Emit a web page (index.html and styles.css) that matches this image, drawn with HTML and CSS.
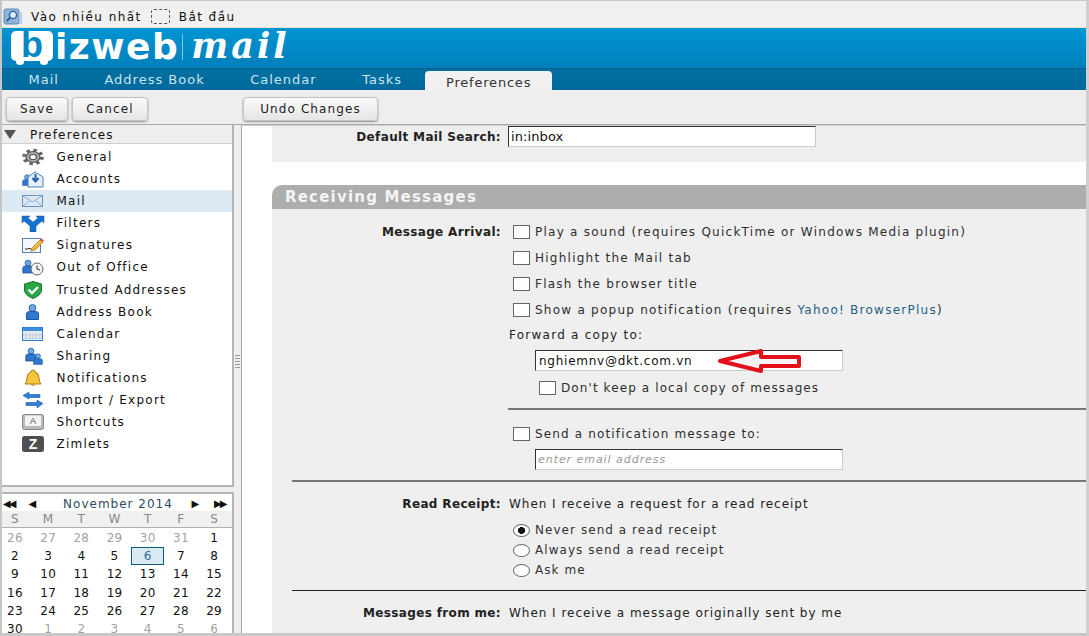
FILE: index.html
```html
<!DOCTYPE html>
<html lang="vi">
<head>
    <meta charset="UTF-8">
    <meta name="viewport" content="width=device-width, initial-scale=1.0">
    <title>Bizweb Mail - Preferences</title>
    <link rel="stylesheet" href="styles.css">
</head>
<body>

    <svg class="defs" width="0" height="0" aria-hidden="true">
        <symbol id="person" viewBox="0 0 14 16">
            <circle cx="7" cy="4" r="3.4" fill="#6fa8e0" stroke="#2a62b0"/>
            <path d="M1 15.5V10q0-2.5 3-2.5h6q3 0 3 2.5v5.5z" fill="#2f78cf" stroke="#1d529c"/>
        </symbol>
    </svg>

    <div class="bookmarks">
        <svg class="bm-icon" viewBox="0 0 20 17">
            <rect x="1" y="1" width="15" height="15" rx="2" fill="#8fb4d9" stroke="#5b86b3"/>
            <rect x="16" y="4" width="3" height="12" fill="#b7cee6"/>
            <circle cx="10" cy="7" r="3.6" fill="#dcebf8" stroke="#2f5f94" stroke-width="1.4"/>
            <path d="M7.4 9.6 3.6 13.2" stroke="#2f5f94" stroke-width="2"/>
        </svg>
        <span class="bm-text">Vào nhiều nhất</span>
        <span class="bm-folder"></span>
        <span class="bm-text">Bắt đầu</span>
    </div>

    <div class="masthead">
        <div class="logo-mark">
            <span class="logo-b">b</span>
            <i class="wheel wheel-l"></i>
            <i class="wheel wheel-r"></i>
        </div>
        <span class="logo-word">izweb</span>
        <span class="logo-bar"></span>
        <span class="logo-mail">mail</span>
    </div>

    <div class="tabs">
        <a class="tab">Mail</a>
        <a class="tab">Address Book</a>
        <a class="tab">Calendar</a>
        <a class="tab">Tasks</a>
        <a class="tab tab-active">Preferences</a>
    </div>

    <div class="toolbar">
        <div class="toolbar-left">
            <button class="btn btn-save">Save</button>
            <button class="btn btn-cancel">Cancel</button>
        </div>
        <button class="btn btn-undo">Undo Changes</button>
    </div>

    <div class="workspace">
        <div class="sidebar">
            <div class="tree">
                <div class="tree-head"><span class="tri"></span>Preferences</div>
                <ul class="tree-list">
                    <li>
                        <svg class="ico" viewBox="0 0 24 18">
                            <g transform="translate(12 9) scale(1.3 1) translate(-12 -9)">
                                <circle cx="12" cy="9" r="6.6" fill="none" stroke="#666" stroke-width="3.4" stroke-dasharray="2.6 2.6"/>
                                <circle cx="12" cy="9" r="5.4" fill="#a9a9a9" stroke="#555"/>
                                <circle cx="12" cy="9" r="2.6" fill="#fff" stroke="#555"/>
                            </g>
                        </svg>General
                    </li>
                    <li>
                        <svg class="ico" viewBox="0 0 24 18">
                            <use href="#person" x="1" y="3" width="10" height="14"/>
                            <path d="M7 7l7-5 8 5v10H7z" fill="#e4eff9" stroke="#4d7fb5"/>
                            <path d="M14.500 4v6M11.500 8l3 3.500 3-3.500" fill="none" stroke="#1f5fb4" stroke-width="2"/>
                        </svg>Accounts
                    </li>
                    <li class="selected">
                        <svg class="ico" viewBox="0 0 24 18">
                            <rect x="1.500" y="3.500" width="20" height="11" fill="#dce9f5" stroke="#6d94bd"/>
                            <path d="M2 4l9.500 6L21 4M2 14l6-5M21 14l-6-5" fill="none" stroke="#8aabcd"/>
                        </svg>Mail
                    </li>
                    <li>
                        <svg class="ico" viewBox="0 0 24 18">
                            <path d="M1 2h8L7 4l5 4 5-4-2-2h8v7l-2-2-6 5v6H9v-6L3 7 1 9z" fill="#1670d0" stroke="#0f58a8" stroke-width=".5"/>
                        </svg>Filters
                    </li>
                    <li>
                        <svg class="ico" viewBox="0 0 24 18">
                            <rect x="1.500" y="2.500" width="18" height="14" fill="#f4f7fb" stroke="#5a7fa8"/>
                            <path d="M4 13h3q1-2 2 0h3" fill="none" stroke="#333"/>
                            <path d="M11 12l8-8 3 2-8 8-4 1z" fill="#f0b93a" stroke="#a8741a" stroke-width=".7"/>
                            <path d="M19 4l1.500-1.500 2.500 2L22 6z" fill="#d9534f"/>
                        </svg>Signatures
                    </li>
                    <li>
                        <svg class="ico" viewBox="0 0 24 18">
                            <use href="#person" x="1" y="1" width="12" height="15"/>
                            <circle cx="16" cy="11" r="6" fill="#f3f3f3" stroke="#666"/>
                            <path d="M16 7.500V11l3 1" fill="none" stroke="#333"/>
                        </svg>Out of Office
                    </li>
                    <li>
                        <svg class="ico" viewBox="0 0 24 18">
                            <path d="M12 0.500l8.500 2.500v6q0 5-8.500 8.500Q3.500 14 3.500 9V3z" fill="#27a845" stroke="#16752e"/>
                            <path d="M7.500 8.500l3.500 3.500 6-6" fill="none" stroke="#fff" stroke-width="2.400"/>
                        </svg>Trusted Addresses
                    </li>
                    <li>
                        <svg class="ico" viewBox="0 0 24 18">
                            <use href="#person" x="4.500" y="1" width="14" height="16"/>
                        </svg>Address Book
                    </li>
                    <li>
                        <svg class="ico" viewBox="0 0 24 18">
                            <rect x="1.500" y="2.500" width="20" height="13" fill="#e8edf3" stroke="#2c7fd0"/>
                            <rect x="2" y="3" width="19" height="3" fill="#3d8fdc"/>
                            <path d="M5 7v8M8.500 7v8M12 7v8M15.500 7v8M19 7v8M2 10h19M2 13h19" stroke="#b9c4d0" stroke-width=".7"/>
                        </svg>Calendar
                    </li>
                    <li>
                        <svg class="ico" viewBox="0 0 24 18">
                            <use href="#person" x="4" y="0" width="12" height="15"/>
                            <use href="#person" x="12" y="6" width="10" height="12"/>
                        </svg>Sharing
                    </li>
                    <li>
                        <svg class="ico" viewBox="0 0 24 18">
                            <path d="M12 1q2 0 2 2 4 1 4 6 0 4 2 6H4q2-2 2-6 0-5 4-6 0-2 2-2z" fill="#f5c63c" stroke="#a97c12"/>
                            <path d="M9.500 15.500q2.500 2.500 5 0z" fill="#a97c12"/>
                        </svg>Notifications
                    </li>
                    <li>
                        <svg class="ico" viewBox="0 0 24 18">
                            <path d="M2 4.500L8 1v2.500h11v3H8V8z" fill="#2f7fd6" stroke="#1d5aa3" stroke-width=".6"/>
                            <path d="M22 12.500L16 9v2.500H5v3h11V17z" fill="#2f7fd6" stroke="#1d5aa3" stroke-width=".6"/>
                        </svg>Import / Export
                    </li>
                    <li>
                        <svg class="ico" viewBox="0 0 24 18">
                            <rect x="1.500" y="1.500" width="21" height="15" rx="2" fill="#b9b9b9" stroke="#888"/>
                            <rect x="4" y="2.500" width="16" height="10.500" rx="1" fill="#f3f3f3"/>
                            <text class="key-text" x="12" y="10.500" text-anchor="middle">A</text>
                        </svg>Shortcuts
                    </li>
                    <li>
                        <svg class="ico" viewBox="0 0 24 18">
                            <rect x="1" y="1" width="22" height="16" rx="2.500" fill="#505050"/>
                            <text class="zim-text" x="12" y="13.500" text-anchor="middle">Z</text>
                        </svg>Zimlets
                    </li>
                </ul>
            </div>

            <div class="minical">
                <div class="cal-head">
                    <span class="cal-nav">◀◀</span>
                    <span class="cal-nav cal-nav-one">◀</span>
                    <span class="cal-title">November 2014</span>
                    <span class="cal-nav cal-nav-one">▶</span>
                    <span class="cal-nav">▶▶</span>
                </div>
                <div class="cal-grid cal-days">
                    <span>S</span><span>M</span><span>T</span><span>W</span><span>T</span><span>F</span><span>S</span>
                </div>
                <div class="cal-grid cal-dates">
                    <span class="dim">26</span><span class="dim">27</span><span class="dim">28</span><span class="dim">29</span><span class="dim">30</span><span class="dim">31</span><span>1</span>
                    <span>2</span><span>3</span><span>4</span><span>5</span><span class="today">6</span><span>7</span><span>8</span>
                    <span>9</span><span>10</span><span>11</span><span>12</span><span>13</span><span>14</span><span>15</span>
                    <span>16</span><span>17</span><span>18</span><span>19</span><span>20</span><span>21</span><span>22</span>
                    <span>23</span><span>24</span><span>25</span><span>26</span><span>27</span><span>28</span><span>29</span>
                    <span>30</span><span class="dim">1</span><span class="dim">2</span><span class="dim">3</span><span class="dim">4</span><span class="dim">5</span><span class="dim">6</span>
                </div>
            </div>
        </div>

        <div class="sash"><span class="grip"></span></div>

        <div class="content">
            <div class="search-panel">
                <label class="row-label">Default Mail Search:</label>
                <div class="text-field search-field">in:inbox</div>
            </div>

            <div class="section-head">Receiving Messages</div>

            <div class="section-body">
                <div class="row">
                    <label class="row-label">Message Arrival:</label>
                    <label class="check"><span class="box"></span>Play a sound (requires QuickTime or Windows Media plugin)</label>
                </div>
                <div class="row">
                    <span class="row-label"></span>
                    <label class="check"><span class="box"></span>Highlight the Mail tab</label>
                </div>
                <div class="row">
                    <span class="row-label"></span>
                    <label class="check"><span class="box"></span>Flash the browser title</label>
                </div>
                <div class="row">
                    <span class="row-label"></span>
                    <label class="check"><span class="box"></span>Show a popup notification (requires <a class="link">Yahoo! BrowserPlus</a>)</label>
                </div>

                <div class="forward-label">Forward a copy to:</div>
                <div class="field-wrap">
                    <div class="text-field address-field">nghiemnv@dkt.com.vn</div>
                    <svg class="red-arrow" viewBox="0 0 86 24">
                        <path d="M3 12 44 2v6h38v9H44v5z" fill="#f4f4f4" stroke="#e3101c" stroke-width="4" stroke-linejoin="round"/>
                    </svg>
                </div>
                <div class="row row-keep">
                    <label class="check"><span class="box"></span>Don't keep a local copy of messages</label>
                </div>

                <div class="rule rule-inner"></div>

                <div class="row row-notify">
                    <span class="row-label"></span>
                    <label class="check"><span class="box"></span>Send a notification message to:</label>
                </div>
                <div class="field-wrap">
                    <div class="text-field address-field placeholder">enter email address</div>
                </div>

                <div class="rule rule-first"></div>

                <div class="row row-head">
                    <label class="row-label">Read Receipt:</label>
                    <span class="row-text">When I receive a request for a read receipt</span>
                </div>
                <div class="radio-row"><span class="radio radio-on"></span>Never send a read receipt</div>
                <div class="radio-row"><span class="radio"></span>Always send a read receipt</div>
                <div class="radio-row"><span class="radio"></span>Ask me</div>

                <div class="rule rule-second"></div>

                <div class="row row-head">
                    <label class="row-label">Messages from me:</label>
                    <span class="row-text">When I receive a message originally sent by me</span>
                </div>
                <div class="radio-row"><span class="radio"></span>Place in Inbox</div>
            </div>
        </div>
    </div>

</body>
</html>
```

FILE: styles.css
```css
* {
    box-sizing: border-box;
}
html {
    overflow: hidden;
}
body {
    margin: 0;
    width: 1089px;
    height: 636px;
    overflow: hidden;
    display: flex;
    flex-direction: column;
    background-color: #eeeeee;
    border-top: 1px solid #c9c9c9;
    border-left: 2px solid #c6c6c6;
    border-right: 3px solid #cfcfd2;
    border-bottom: 3px solid #c9c9c9;
    font-family: "DejaVu Sans", sans-serif;
    font-size: 12px;
    letter-spacing: 1.25px;
    color: #222;
}
.defs {
    position: absolute;
}

/* browser bookmarks */
.bookmarks {
    height: 27px;
    flex: none;
    display: flex;
    align-items: center;
    background-color: #f0f0f0;
    padding-left: 1px;
    padding-top: 5px;
    border-bottom: 1px solid #e8e2c8;
}
.bm-icon {
    width: 20px;
    height: 17px;
    margin-right: 8px;
}
.bm-text {
    color: #111;
    letter-spacing: 1.45px;
}
.bm-folder {
    width: 19px;
    height: 15px;
    margin: 0 9px 0 9px;
    border: 1px dashed #555;
    border-radius: 3px;
}

/* header */
.masthead {
    height: 40px;
    flex: none;
    display: flex;
    align-items: center;
    padding-left: 9px;
    color: #fff;
    background: linear-gradient(#0095d3, #007fbb);
}
.logo-mark {
    position: relative;
    width: 42px;
    height: 30px;
    margin-top: -4px;
    background-color: #fff;
    border-radius: 5px;
    text-align: center;
}
.logo-b {
    font-family: "Liberation Sans", sans-serif;
    font-size: 36px;
    font-weight: bold;
    line-height: 27px;
    letter-spacing: 0;
    color: #0088c6;
}
.wheel {
    position: absolute;
    bottom: -4px;
    width: 8px;
    height: 6px;
    border-radius: 50%;
    background-color: #fff;
}
.wheel-l {
    left: 5px;
}
.wheel-r {
    right: 5px;
}
.logo-word {
    font-family: "DejaVu Sans", sans-serif;
    font-size: 36px;
    font-weight: bold;
    line-height: 40px;
    letter-spacing: 1.5px;
    margin-left: 2px;
    margin-top: -2px;
}
.logo-bar {
    width: 1px;
    height: 26px;
    margin: -2px 8px 0 3px;
    background-color: #7fc6e6;
}
.logo-mail {
    font-family: "DejaVu Serif", serif;
    font-size: 35px;
    font-style: italic;
    font-weight: bold;
    letter-spacing: 3px;
    line-height: 36px;
    margin-top: -4px;
}

/* tabs */
.tabs {
    height: 22px;
    flex: none;
    display: flex;
    align-items: flex-end;
    padding-left: 4px;
    background: linear-gradient(#006f9f, #006a9c);
    border-top: 1px solid #00618e;
}
.tab {
    height: 21px;
    padding: 0 23px 0 22.5px;
    line-height: 22px;
    color: #c9e4f1;
    font-size: 13px;
    letter-spacing: 1px;
}
.tab-active {
    height: 19px;
    line-height: 24px;
    padding: 0 21px;
    letter-spacing: 0.8px;
    color: #333;
    background-color: #f1f1f1;
    border-radius: 4px 4px 0 0;
}

/* toolbar */
.toolbar {
    height: 35px;
    flex: none;
    display: flex;
    align-items: center;
    padding: 4px 0 0 4px;
    border-bottom: 1px solid #a9a9a9;
}
.toolbar-left {
    display: flex;
    gap: 4px;
    width: 237px;
}
.btn {
    height: 24px;
    padding: 0;
    font-family: "DejaVu Sans", sans-serif;
    font-size: 12px;
    letter-spacing: 1.1px;
    color: #222;
    background: linear-gradient(#fafafa, #e6e6e6);
    border: 1px solid #c4c4c4;
    border-radius: 4px;
    box-shadow: 0 1px 2px rgba(0, 0, 0, 0.4);
}
.btn-save {
    width: 62px;
}
.btn-cancel {
    width: 76px;
}
.btn-undo {
    width: 135px;
}

/* left column */
.workspace {
    flex: 1;
    min-height: 0;
    display: flex;
}
.sidebar {
    width: 232px;
    flex: none;
    display: flex;
    flex-direction: column;
    gap: 5px;
}
.tree {
    height: 362px;
    flex: none;
    background-color: #fff;
    border-right: 2px solid #b5b5b5;
    border-bottom: 2px solid #b5b5b5;
}
.tree-head {
    height: 19px;
    display: flex;
    align-items: center;
    padding-top: 1px;
    background-color: #eeeeee;
    border-bottom: 1px solid #cfcfcf;
    font-size: 12px;
    letter-spacing: 1.2px;
    color: #111;
}
.tri {
    width: 0;
    height: 0;
    margin: 0 14px 0 2px;
    border-left: 6px solid transparent;
    border-right: 6px solid transparent;
    border-top: 9px solid #555;
}
.tree-list {
    margin: 2px 0 0;
    padding: 0;
    list-style: none;
}
.tree-list li {
    height: 22.08px;
    display: flex;
    align-items: center;
    padding-left: 19px;
    color: #111;
}
.tree-list li.selected {
    background-color: #dde9f3;
}
.ico {
    width: 24px;
    height: 18px;
    margin-right: 11.5px;
    flex: none;
}
.key-text {
    font-family: "Liberation Sans", sans-serif;
    font-size: 9px;
    letter-spacing: 0;
    fill: #555;
}
.zim-text {
    font-family: "Liberation Sans", sans-serif;
    font-size: 14px;
    font-weight: bold;
    letter-spacing: 0;
    fill: #fff;
}

/* mini calendar */
.minical {
    flex: 1;
    background-color: #fff;
    border-top: 2px solid #b5b5b5;
    border-right: 2px solid #b5b5b5;
    overflow: hidden;
}
.cal-head {
    height: 17px;
    padding: 2px 3px 0 1px;
    display: flex;
    align-items: center;
    justify-content: space-between;
    font-size: 10px;
    letter-spacing: -2px;
    color: #111;
}
.cal-nav {
    width: 15px;
}
.cal-nav-one {
    width: 12px;
}
.cal-title {
    font-size: 12px;
    letter-spacing: 1px;
    color: #2f4a63;
    margin: 0 8px 0 12px;
}
.cal-grid {
    display: grid;
    grid-template-columns: repeat(7, 33.2px);
    text-align: center;
    justify-content: start;
    letter-spacing: 0.3px;
    font-size: 12px;
}
.cal-grid > span {
    position: relative;
    left: -3.6px;
}
.cal-days {
    height: 17px;
    line-height: 16px;
    color: #888;
    background-color: #f0f0f0;
    border-bottom: 1px solid #b0b0b0;
}
.cal-dates {
    margin-top: 1px;
    grid-auto-rows: 18.2px;
    line-height: 18px;
    color: #111;
}
.dim {
    color: #a3a3a3;
}
.today {
    color: #1a6f9e;
    background-color: #dbe9f3;
    border: 1px solid #0e5a78;
    line-height: 16px;
}

/* sash */
.sash {
    width: 7px;
    flex: none;
    display: flex;
    align-items: flex-start;
    justify-content: center;
    padding-top: 230px;
}
.grip {
    width: 5px;
    height: 13px;
    background: repeating-linear-gradient(#999 0, #999 1px, #eee 1px, #eee 3px);
}

/* right column */
.content {
    flex: 1;
    min-width: 0;
    overflow: hidden;
    padding-left: 30px;
    background-color: #fff;
    border-left: 1px solid #a6a6a6;
    border-top: 1px solid #d0d0d0;
}
.search-panel {
    height: 36px;
    display: grid;
    grid-template-columns: 229px 1fr;
    column-gap: 7px;
    align-items: start;
    background-color: #eeeeee;
}
.row-label {
    height: 22px;
    line-height: 22px;
    text-align: right;
    font-weight: bold;
    font-size: 12px;
    letter-spacing: 0.35px;
    color: #222;
}
.text-field {
    height: 21px;
    line-height: 20px;
    width: 308px;
    padding-left: 2px;
    background-color: #fff;
    border-top: 1px solid #333;
    border-left: 1px solid #333;
    border-right: 1px solid #ccc;
    border-bottom: 1px solid #ccc;
    color: #111;
}
.search-field {
    font-size: 13px;
    letter-spacing: 0.1px;
}
.section-head {
    height: 24px;
    margin-top: 23px;
    padding-left: 13px;
    line-height: 25px;
    font-size: 15px;
    font-weight: bold;
    letter-spacing: 1.2px;
    color: #f4f4f4;
    background-color: #adadad;
    border-radius: 10px 0 0 0;
}
.section-body {
    padding-top: 10px;
    background-color: #efefef;
    min-height: 430px;
}
.row {
    height: 26px;
    display: grid;
    grid-template-columns: 229px 1fr;
    column-gap: 7px;
    align-items: center;
}
.row .row-label {
    height: auto;
}
.check {
    display: flex;
    align-items: center;
    color: #2e2e2e;
    padding-left: 5px;
    white-space: nowrap;
}
.box {
    width: 17px;
    height: 14px;
    margin-right: 5px;
    background-color: #fff;
    border: 1px solid #666;
    flex: none;
}
.link {
    color: #1e5f86;
    margin-left: 0.4em;
}
.forward-label {
    height: 24px;
    line-height: 24px;
    margin-left: 237px;
    color: #222;
}
.field-wrap {
    position: relative;
    margin: 3px 0 0 263px;
    width: 308px;
}
.address-field {
    padding-left: 3px;
    letter-spacing: 0.75px;
}
.red-arrow {
    position: absolute;
    left: 182px;
    top: -1px;
    width: 86px;
    height: 24px;
}
.row-keep {
    display: flex;
    margin: 4px 0 0 262px;
}
.row-keep .check {
    letter-spacing: 1.1px;
}
.rule {
    height: 2px;
}
.rule-inner {
    margin: 7px 0 0 236px;
    background-color: #777;
}
.row-notify {
    margin-top: 11px;
    letter-spacing: 1.15px;
}
.row-notify + .field-wrap {
    margin-top: 2px;
}
.placeholder {
    font-style: italic;
    font-size: 11px;
    letter-spacing: 0.95px;
    padding-left: 2px;
    color: #999;
}
.rule-first {
    margin: 10px 0 0 20px;
    background-color: #777;
}
.rule-second {
    margin: 10px 0 0 20px;
    height: 1px;
    background-color: #222;
}
.row-head {
    margin-top: 9px;
    margin-bottom: 3px;
}
.row-text {
    padding-left: 1px;
    color: #222;
    letter-spacing: 0.97px;
}
.radio-row {
    height: 20px;
    display: flex;
    align-items: center;
    margin-left: 241px;
    color: #333;
    letter-spacing: 1.05px;
}
.radio {
    width: 17px;
    height: 13px;
    margin-right: 5px;
    border: 1px solid #666;
    border-radius: 50%;
    background-color: #fff;
    flex: none;
}
.radio-on {
    background: radial-gradient(ellipse 4px 3.500px, #111 90%, #fff 100%);
}
```
